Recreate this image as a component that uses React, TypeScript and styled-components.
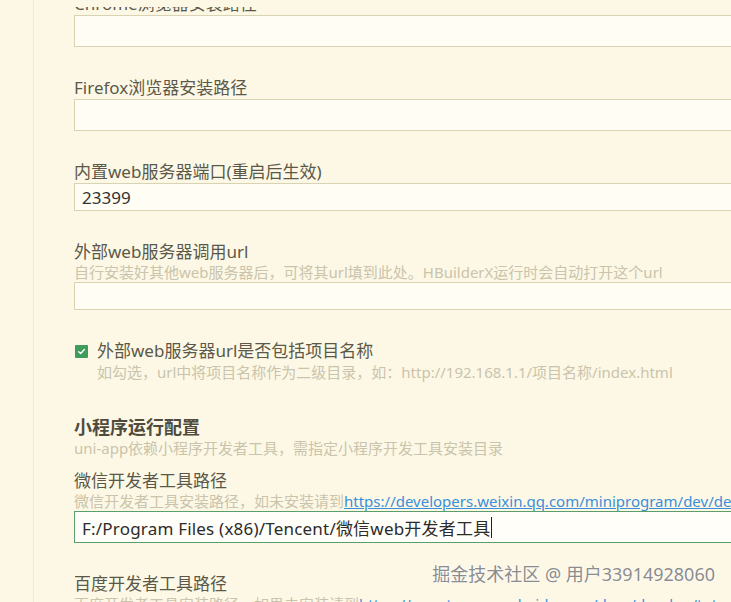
import { FC } from 'react';

import styled, { createGlobalStyle } from 'styled-components';

const GlobalStyle = createGlobalStyle`
  html, body {
    margin: 0;
    padding: 0;
    height: 100%;
    overflow: hidden;
    background: #fdf8e6;
  }

  body {
    font-family: "Noto Sans", "Noto Sans CJK SC", sans-serif;
  }
`;

const weixinLink = 'https://developers.weixin.qq.com/miniprogram/dev/devtools/download.html';
const baiduLink = 'https://smartprogram.baidu.com/docs/develop/tutorial/install/';

/**
 * HBuilderX settings: run configuration
 */
const App: FC = () => {
  return (
    <>
      <GlobalStyle />
      <Shell>
        <SideBar />
        <Main>
          <TopStrip />
          <Scroller>
            <Content>
              <Field>
                <Label>Chrome浏览器安装路径</Label>
                <TextInput $size="tall" />
              </Field>

              <Field>
                <Label>Firefox浏览器安装路径</Label>
                <TextInput $size="tall" />
              </Field>

              <Field>
                <Label>内置web服务器端口(重启后生效)</Label>
                <TextInput $size="short" defaultValue="23399" />
              </Field>

              <Field>
                <Label>外部web服务器调用url</Label>
                <Hint>
                  自行安装好其他web服务器后，可将其url填到此处。HBuilderX运行时会自动打开这个url
                </Hint>
                <TextInput $size="short" />
              </Field>

              <CheckField>
                <CheckRow>
                  <CheckBox>
                    <svg width="9" height="9" viewBox="0 0 10 10">
                      <path
                        d="M1.8 5.2 L4 7.2 L8.2 2.8"
                        fill="none"
                        stroke="#fff"
                        strokeWidth="1.6"
                        strokeLinecap="round"
                        strokeLinejoin="round"
                      />
                    </svg>
                  </CheckBox>
                  <Label>外部web服务器url是否包括项目名称</Label>
                </CheckRow>
                <CheckHint>
                  如勾选，url中将项目名称作为二级目录，如：http://192.168.1.1/项目名称/index.html
                </CheckHint>
              </CheckField>

              <SectionTitle>小程序运行配置</SectionTitle>
              <SectionHint>uni-app依赖小程序开发者工具，需指定小程序开发工具安装目录</SectionHint>

              <Field>
                <Label>微信开发者工具路径</Label>
                <Hint>
                  微信开发者工具安装路径，如未安装请到<Link>{weixinLink}</Link>
                </Hint>
                <InputBox $focused>
                  F:/Program Files (x86)/Tencent/微信web开发者工具
                  <Caret />
                </InputBox>
              </Field>

              <Field>
                <Label>百度开发者工具路径</Label>
                <Hint>
                  百度开发者工具安装路径，如果未安装请到<Link>{baiduLink}</Link>
                </Hint>
                <TextInput $size="tall" />
              </Field>
            </Content>
          </Scroller>
        </Main>
      </Shell>
      <Watermark>掘金技术社区 @ 用户33914928060</Watermark>
    </>
  );
};

export default App;

// Styled Components
const Shell = styled.div`
  display: flex;
  height: 602px;
`;

const SideBar = styled.div`
  flex: 0 0 33px;
  border-right: 1px solid #f1ead2;
`;

const Main = styled.div`
  flex: 1;
  min-width: 0;
  display: flex;
  flex-direction: column;
`;

const TopStrip = styled.div`
  flex: 0 0 7px;
  background: #fdf8e6;
`;

const Scroller = styled.div`
  flex: 1;
  overflow: hidden;
`;

const Content = styled.div`
  padding-left: 40px;
  margin-top: -14px;
  display: flex;
  flex-direction: column;
`;

const Field = styled.div`
  display: flex;
  flex-direction: column;
  margin-bottom: 30px;
`;

const Label = styled.div`
  height: 22px;
  font-size: 17px;
  line-height: 22px;
  color: #5b5849;
  white-space: nowrap;
`;

const Hint = styled.div`
  height: 19px;
  font-size: 15px;
  line-height: 19px;
  color: #c9c4ab;
  white-space: nowrap;
`;

const Link = styled.span`
  color: #3b8fd9;
  text-decoration: underline;
`;

const TextInput = styled.input<{ $size: 'tall' | 'short' }>`
  box-sizing: border-box;
  width: 700px;
  height: ${(p) => (p.$size === 'tall' ? '32px' : '28px')};
  margin: 0;
  padding: 0 7px;
  background: #fffdf4;
  border: 1px solid #d8d3b2;
  border-radius: 0;
  font-family: inherit;
  font-size: 17px;
  color: #333;
  outline: none;
`;

const InputBox = styled.div<{ $focused?: boolean }>`
  box-sizing: border-box;
  width: 700px;
  height: 32px;
  padding: 0 7px;
  display: flex;
  align-items: center;
  background: #fffef9;
  border: 1px solid ${(p) => (p.$focused ? '#5a9e6c' : '#d8d3b2')};
  font-size: 17px;
  letter-spacing: 0.2px;
  color: #2b2b2b;
  white-space: nowrap;
`;

const Caret = styled.span`
  display: inline-block;
  width: 1px;
  height: 21px;
  margin-left: 1px;
  background: #222;
`;

const CheckField = styled.div`
  display: flex;
  flex-direction: column;
  margin-bottom: 29px;
`;

const CheckRow = styled.div`
  display: flex;
  align-items: center;
  gap: 9px;
  padding-left: 1px;
`;

const CheckBox = styled.span`
  width: 13px;
  height: 13px;
  display: flex;
  align-items: center;
  justify-content: center;
  background: #3f9d5b;
  border-radius: 1px;
`;

const CheckHint = styled(Hint)`
  height: 20px;
  padding-left: 23px;
  line-height: 20px;
`;

const SectionTitle = styled.div`
  height: 24px;
  margin-top: 4px;
  font-size: 18px;
  line-height: 24px;
  font-weight: 700;
  color: #4f4c3e;
`;

const SectionHint = styled(Hint)`
  margin-bottom: 12px;
`;

const Watermark = styled.div`
  position: absolute;
  right: 16px;
  bottom: 17px;
  font-size: 18px;
  line-height: 22px;
  color: #8c8c8c;
  text-shadow: 0 0 2px #fff, 0 0 1px #fff;
  white-space: nowrap;
`;
